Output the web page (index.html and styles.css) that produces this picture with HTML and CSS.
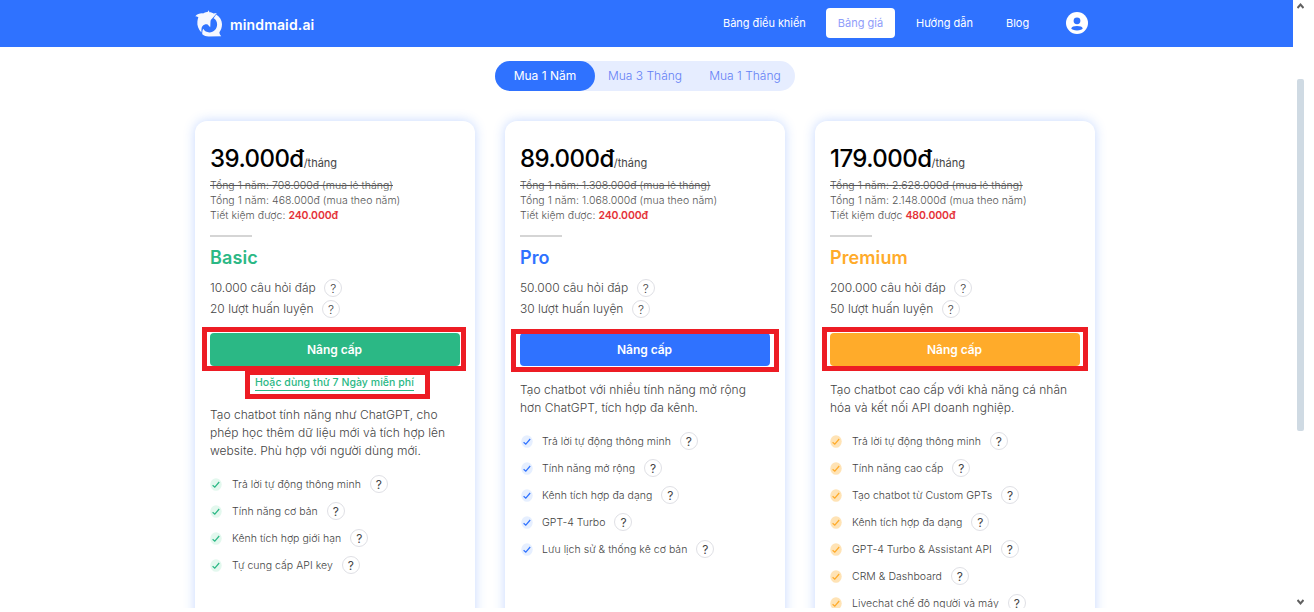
FILE: index.html
```
<!DOCTYPE html>
<html lang="vi">
<head>
<meta charset="utf-8">
<title>mindmaid.ai</title>
<link rel="stylesheet" href="styles.css">
</head>
<body>
<svg width="0" height="0" class="defs">
  <symbol id="check" viewBox="0 0 12 13"><ellipse class="disc" cx="6" cy="6.5" rx="5.7" ry="6.3"/><path d="M2.6 7.2 L4.8 9.2 L9.2 4" fill="none" stroke="currentColor" stroke-width="1.2"/></symbol>
</svg>
<div class="screen">
  <div class="page">
    <header class="topbar">
      <a class="brand">
        <svg class="logo" width="28" height="28" viewBox="0 0 28 28">
          <path fill="#f5f7ff" d="M0.3 6.2 C2.5 4 5 3.1 8 3.4 C9.5 2.4 11 1.8 12.5 2 L13.8 0.3 L14.4 2.2 C16 2 17.5 2.8 18.5 3.4 L21.8 3 L19.2 6.2 L15.8 10 C15.2 12 15.6 14.5 15.2 17.2 L12.6 14.4 C10.8 14 8.8 14.6 7.4 16.2 C6.4 17.6 6.4 19.3 6.4 22.4 C3.4 19.5 1.9 15.5 2.4 11.5 C2.6 9.6 3 8.3 3.4 7.3 C2.4 6.5 1.4 6.2 0.3 6.2 Z"/>
          <path fill="#f5f7ff" d="M21.2 4.4 C24.9 6.6 27 10.3 27 14.3 C27 17.5 25.9 20.2 24.4 22.3 C24.5 24 25.2 25.2 26.2 26.2 L13.6 26.5 C11.2 26.4 9.1 25.6 7.3 24.2 C7.1 22.7 7.4 20.4 8.2 18.8 C9.3 21 11.8 22.4 14.4 22.4 C18.8 22.4 22.1 18.8 22.1 14.5 C22.1 11.7 20.9 9.5 18.6 8.3 Z"/>
        </svg>
        <span class="brand-name">mindmaid.ai</span>
      </a>
      <nav class="nav">
        <a class="n1">Bảng điều khiển</a>
        <a class="active">Bảng giá</a>
        <a class="n3">Hướng dẫn</a>
        <a class="n4">Blog</a>
        <svg class="avatar" width="22" height="22" viewBox="0 0 22 22"><circle cx="11" cy="11" r="11" fill="#fff"/><circle cx="11" cy="8.8" r="3.4" fill="#2f72ff"/><ellipse cx="11" cy="16.2" rx="5.5" ry="2.3" fill="#2f72ff"/></svg>
      </nav>
    </header>
    <div class="tabs"><span class="on">Mua 1 Năm</span><span>Mua 3 Tháng</span><span>Mua 1 Tháng</span></div>
    <main class="plans">
      <section class="card basic">
        <div class="price"><b>39.000đ</b><small>/tháng</small></div>
        <div class="totals"><s>Tổng 1 năm: 708.000đ (mua lẻ tháng)</s><span>Tổng 1 năm: 468.000đ (mua theo năm)</span><span>Tiết kiệm được: <em>240.000đ</em></span></div>
        <hr>
        <h2>Basic</h2>
        <ul class="quota"><li><span>10.000 câu hỏi đáp</span><i>?</i></li><li><span>20 lượt huấn luyện</span><i>?</i></li></ul>
        <div class="cta"><button>Nâng cấp</button><div class="mark"></div></div>
        <div class="trial"><a>Hoặc dùng thử 7 Ngày miễn phí</a><div class="mark"></div></div>
        <p>Tạo chatbot tính năng như ChatGPT, cho<br>phép học thêm dữ liệu mới và tích hợp lên<br>website. Phù hợp với người dùng mới.</p>
        <ul class="features">
          <li><svg><use href="#check"/></svg><span>Trả lời tự động thông minh</span><i>?</i></li>
          <li><svg><use href="#check"/></svg><span>Tính năng cơ bản</span><i>?</i></li>
          <li><svg><use href="#check"/></svg><span>Kênh tích hợp giới hạn</span><i>?</i></li>
          <li><svg><use href="#check"/></svg><span>Tự cung cấp API key</span><i>?</i></li>
        </ul>
      </section>
      <section class="card pro">
        <div class="price"><b>89.000đ</b><small>/tháng</small></div>
        <div class="totals"><s>Tổng 1 năm: 1.308.000đ (mua lẻ tháng)</s><span>Tổng 1 năm: 1.068.000đ (mua theo năm)</span><span>Tiết kiệm được: <em>240.000đ</em></span></div>
        <hr>
        <h2>Pro</h2>
        <ul class="quota"><li><span>50.000 câu hỏi đáp</span><i>?</i></li><li><span>30 lượt huấn luyện</span><i>?</i></li></ul>
        <div class="cta"><button>Nâng cấp</button><div class="mark"></div></div>
        <p>Tạo chatbot với nhiều tính năng mở rộng<br>hơn ChatGPT, tích hợp đa kênh.</p>
        <ul class="features">
          <li><svg><use href="#check"/></svg><span>Trả lời tự động thông minh</span><i>?</i></li>
          <li><svg><use href="#check"/></svg><span>Tính năng mở rộng</span><i>?</i></li>
          <li><svg><use href="#check"/></svg><span>Kênh tích hợp đa dạng</span><i>?</i></li>
          <li><svg><use href="#check"/></svg><span>GPT-4 Turbo</span><i>?</i></li>
          <li><svg><use href="#check"/></svg><span>Lưu lịch sử &amp; thống kê cơ bản</span><i>?</i></li>
        </ul>
      </section>
      <section class="card premium">
        <div class="price"><b>179.000đ</b><small>/tháng</small></div>
        <div class="totals"><s>Tổng 1 năm: 2.628.000đ (mua lẻ tháng)</s><span>Tổng 1 năm: 2.148.000đ (mua theo năm)</span><span>Tiết kiệm được <em>480.000đ</em></span></div>
        <hr>
        <h2>Premium</h2>
        <ul class="quota"><li><span>200.000 câu hỏi đáp</span><i>?</i></li><li><span>50 lượt huấn luyện</span><i>?</i></li></ul>
        <div class="cta"><button>Nâng cấp</button><div class="mark"></div></div>
        <p>Tạo chatbot cao cấp với khả năng cá nhân<br>hóa và kết nối API doanh nghiệp.</p>
        <ul class="features">
          <li><svg><use href="#check"/></svg><span>Trả lời tự động thông minh</span><i>?</i></li>
          <li><svg><use href="#check"/></svg><span>Tính năng cao cấp</span><i>?</i></li>
          <li><svg><use href="#check"/></svg><span>Tạo chatbot từ Custom GPTs</span><i>?</i></li>
          <li><svg><use href="#check"/></svg><span>Kênh tích hợp đa dạng</span><i>?</i></li>
          <li><svg><use href="#check"/></svg><span>GPT-4 Turbo &amp; Assistant API</span><i>?</i></li>
          <li><svg><use href="#check"/></svg><span>CRM &amp; Dashboard</span><i>?</i></li>
          <li><svg><use href="#check"/></svg><span>Livechat chế độ người và máy</span><i>?</i></li>
        </ul>
      </section>
    </main>
  </div>
  <aside class="scrollbar">
    <svg width="7" height="6" viewBox="0 0 7 6"><path d="M0.5 5 L3.5 1.6 L6.5 5" fill="none" stroke="#606060" stroke-width="2"/></svg>
    <div class="thumb"></div>
    <svg width="7" height="6" viewBox="0 0 7 6"><path d="M0.5 1 L3.5 4.4 L6.5 1" fill="none" stroke="#606060" stroke-width="2"/></svg>
  </aside>
</div>
</body>
</html>
```
FILE: styles.css
```
* { box-sizing: border-box; }
body { margin: 0; background: #fff; font-family: Inter, "Noto Sans", sans-serif; font-weight: 300; color: #444; height: 612px; overflow: hidden; }
.defs { display: block; position: absolute; }
.screen { display: flex; width: 1304px; height: 608px; overflow: hidden; }
.page { width: 1293px; height: 608px; overflow: hidden; }
.topbar { height: 47px; background: #2f72ff; color: #fff; display: flex; justify-content: space-between; padding: 0 205px 0 195px; }
.brand { display: flex; align-items: center; gap: 7px; padding-top: 1px; }
.brand-name { font-size: 14px; font-weight: 600; letter-spacing: .15px; }
.nav { display: flex; align-items: center; height: 46px; font-size: 11px; font-weight: 400; white-space: nowrap; }
.n1 { width: 83px; margin-right: 20px; letter-spacing: -.06px; }
.active { width: 69px; height: 30px; line-height: 31px; background: #fff; color: #8f9dfa; border-radius: 4px; text-align: center; margin-right: 21px; }
.n3 { width: 57px; margin-right: 33px; }
.n4 { width: 23px; margin-right: 37px; }
.tabs { display: flex; width: 300px; height: 30px; margin: 14px 0 0 495px; border-radius: 15px; background: #e6edff; color: #6480f5; font-size: 12px; line-height: 30px; }
.tabs span { width: 100px; text-align: center; white-space: nowrap; }
.tabs .on { background: #2f72ff; color: #fff; border-radius: 15px; font-weight: 400; }
.plans { display: flex; gap: 30px; padding: 30px 0 0 195px; }
.card { width: 280px; height: 560px; border-radius: 12px; padding: 24px 15px 0; background: #fff; box-shadow: 0 0 12px rgba(47, 114, 255, .28); white-space: nowrap; }
.price { height: 33px; display: flex; align-items: baseline; color: #000; line-height: 28px; }
.price b { font-size: 24px; font-weight: 500; letter-spacing: -.55px; }
.price small { font-size: 11px; font-weight: 400; color: #444; }
.totals { display: flex; flex-direction: column; align-items: flex-start; font-size: 10.5px; line-height: 15px; letter-spacing: .03px; color: #555; }
.totals em { font-style: normal; font-weight: 600; color: #e53238; letter-spacing: -.1px; }
hr { width: 42px; height: 2px; border: 0; background: #d5d5d5; margin: 12px 0 9px; }
h2 { margin: 0; font-size: 18px; line-height: 24px; font-weight: 600; letter-spacing: .1px; color: var(--main); }
.basic { --main: #2bb885; --disc: #e3f8ee; }
.pro { --main: #2f72ff; --disc: #e6efff; }
.premium { --main: #ffab2a; --disc: #ffe3b5; }
ul { list-style: none; margin: 0; padding: 0; }
li { display: flex; align-items: center; }
li i { width: 18px; height: 18px; border: 1px solid #dfe0e5; border-radius: 50%; font-style: normal; font-size: 12px; line-height: 17px; letter-spacing: 0; text-align: center; font-weight: 400; color: #444; margin-left: 9px; }
.quota { padding-top: 7px; font-size: 12px; }
.quota li { height: 21px; }
.quota i { margin-left: 8.5px; font-weight: 300; }
.cta { position: relative; margin-top: 14px; height: 33px; }
.cta button { display: block; width: 250px; height: 33px; border: 0; border-radius: 4px; background: var(--main); color: #fff; font: 600 12px Inter, sans-serif; letter-spacing: -.05px; padding: 0 1px 0 0; }
.mark { position: absolute; border: 5px solid #ed1c24; }
.cta .mark { left: -8px; top: -6px; width: 264px; height: 44px; }
.pro .cta .mark { left: -9px; top: -4px; width: 268px; height: 43px; }
.premium .cta .mark { width: 266px; }
.trial { position: relative; height: 32px; padding: 9px 0 0 45px; }
.trial a { display: block; width: 159px; height: 16px; border-bottom: 1px solid var(--main); color: var(--main); font-size: 10.5px; line-height: 16px; letter-spacing: .05px; font-weight: 500; }
.trial .mark { left: 35px; top: 4px; width: 185px; height: 29px; }
p { margin: 0; padding-top: 15px; font-size: 12px; line-height: 18px; letter-spacing: .03px; color: #444; }
.basic p { padding-top: 8px; }
.features { padding-top: 10px; font-size: 10.5px; letter-spacing: .03px; }
.features li { height: 27px; }
.features span { padding-top: 1px; }
.features svg { width: 12px; height: 13px; margin: 1px 10px 0 0; color: var(--main); }
.pro .features svg { margin: 1px 9px 0 1px; }
.disc { fill: var(--disc); }
.scrollbar { width: 7px; margin-left: 4px; display: flex; flex-direction: column; padding-top: 3px; }
.scrollbar svg { display: block; }
.thumb { height: 352px; margin: 70px 0 168px; background: #cfdae3; border-radius: 2px; }
```
